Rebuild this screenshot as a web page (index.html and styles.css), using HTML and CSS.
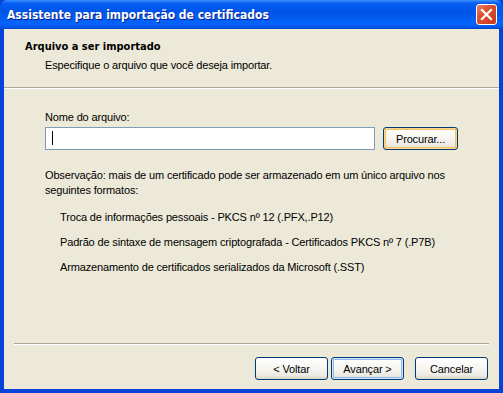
FILE: index.html
```html
<!DOCTYPE html>
<html>

<head>
    <title>Assistente para importação de certificados</title>

    <link rel="stylesheet" href="styles.css">
</head>

<body>

    <div class="window">
        <div class="titlebar">
            <span class="title">Assistente para importação de certificados</span>
            <span class="close">
                <svg width="13" height="13" viewBox="0 0 13 13">
                    <path d="M2 2 L11 11 M11 2 L2 11" stroke="#fff" stroke-width="2.2" stroke-linecap="square" />
                </svg>
            </span>
        </div>

        <div class="frame">
            <div class="header">
                <div class="header-title">Arquivo a ser importado</div>
                <div class="header-sub">Especifique o arquivo que você deseja importar.</div>
            </div>

            <div class="main">
                <div class="label">Nome do arquivo:</div>
                <div class="file-row">
                    <div class="field"><span class="caret"></span></div>
                    <button class="btn btn-hot">Procurar...</button>
                </div>

                <p class="note">Observação: mais de um certificado pode ser armazenado em um único arquivo nos
                    seguintes formatos:</p>

                <ul class="formats">
                    <li>Troca de informações pessoais - PKCS nº 12 (.PFX,.P12)</li>
                    <li>Padrão de sintaxe de mensagem criptografada - Certificados PKCS nº 7 (.P7B)</li>
                    <li>Armazenamento de certificados serializados da Microsoft (.SST)</li>
                </ul>
            </div>

            <div class="footer">
                <button class="btn">&lt; Voltar</button>
                <button class="btn btn-default">Avançar &gt;</button>
                <button class="btn btn-cancel">Cancelar</button>
            </div>
        </div>
    </div>

</body>

</html>
```

FILE: styles.css
```css
body {
    margin: 0;
    font-family: "Liberation Sans", Arial, sans-serif;
    font-size: 11px;
    letter-spacing: -0.15px;
    color: #000;
}

.window {
    width: 503px;
    height: 393px;
    display: flex;
    flex-direction: column;
    background: #0843d8;
}

/**
 * Luna title bar
 */
.titlebar {
    height: 29px;
    flex: none;
    display: flex;
    align-items: center;
    justify-content: space-between;
    padding: 0 6px 0 7px;
    box-sizing: border-box;
    border-radius: 7px 7px 0 0;
    background: linear-gradient(#3d95ff 0, #0a5ef2 3px, #0058ee 8px, #0055e6 40%, #0464fb 80%, #0558ee 92%, #0046c8 100%);
}

.title {
    color: #fff;
    font-family: "DejaVu Sans Condensed", "DejaVu Sans", sans-serif;
    font-stretch: condensed;
    font-weight: bold;
    font-size: 12px;
    letter-spacing: 0;
    text-shadow: 1px 1px 0 #0a1e8c;
}

.close {
    width: 21px;
    height: 21px;
    box-sizing: border-box;
    border: 1px solid #fff;
    border-radius: 3px;
    background: linear-gradient(135deg, #e8836a 0, #dc4f2e 40%, #c93a1c 100%);
    display: flex;
    align-items: center;
    justify-content: center;
}

.frame {
    flex: 1;
    display: flex;
    flex-direction: column;
    margin: 0 4px 4px 4px;
    background: #ece9d8;
}

/**
 * Wizard header
 */
.header {
    height: 59px;
    box-sizing: border-box;
    padding: 11px 0 0 21px;
    border-bottom: 1px solid #aca899;
    box-shadow: 0 1px 0 #fff;
    line-height: 13px;
}

.header-title {
    font-family: "DejaVu Sans Condensed", "DejaVu Sans", sans-serif;
    font-stretch: condensed;
    font-weight: bold;
    font-size: 11px;
    letter-spacing: 0;
}

.header-sub {
    margin: 6px 0 0 20px;
}

.main {
    padding: 23px 0 0 41px;
    line-height: 13px;
}

.file-row {
    display: flex;
    gap: 8px;
    margin-top: 3px;
}

.field {
    width: 330px;
    height: 23px;
    box-sizing: border-box;
    border: 1px solid #7f9db9;
    background: #fff;
    padding: 3px 0 0 6px;
}

.caret {
    display: block;
    width: 1px;
    height: 14px;
    background: #000;
}

.note {
    margin: 18px 0 0 0;
    width: 410px;
    line-height: 15px;
}

.formats {
    list-style: none;
    margin: 12px 0 0 15px;
    padding: 0;
}

.formats li {
    line-height: 14px;
    margin-bottom: 11px;
}

/**
 * Bottom button bar
 */
.footer {
    margin: auto 10px 0 10px;
    border-top: 1px solid #aca899;
    box-shadow: inset 0 1px 0 #fff;
    padding: 13px 1px 9px 0;
    display: flex;
    justify-content: flex-end;
}

.btn {
    width: 73px;
    height: 23px;
    box-sizing: border-box;
    border: 1px solid #003c74;
    border-radius: 3px;
    background: linear-gradient(#fff 0, #f6f5f1 50%, #ebe9e1 85%, #d8d2c2 100%);
    font-family: "Liberation Sans", Arial, sans-serif;
    font-size: 11px;
    letter-spacing: -0.15px;
    color: #000;
    padding: 0;
}

.btn-hot {
    width: 75px;
    box-shadow: inset 0 0 0 1px #fbd792, inset 0 0 0 2px #f6c063;
}

.btn-default {
    margin-left: 3px;
    box-shadow: inset 0 0 0 1px #cee7ff, inset 0 0 0 2px #98b8ea;
}

.btn-cancel {
    margin-left: 11px;
}
```
